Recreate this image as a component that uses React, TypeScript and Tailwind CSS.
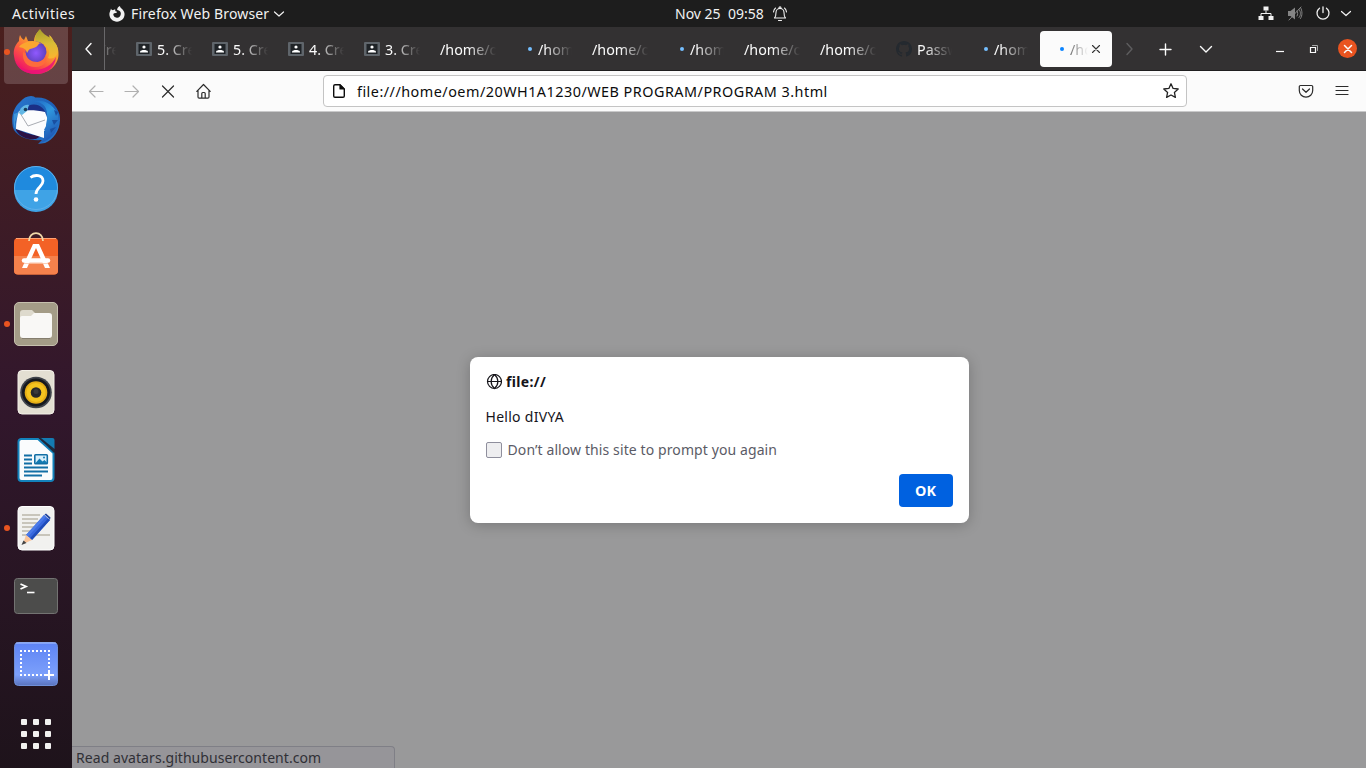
import React from 'react';

type Kids = { children?: React.ReactNode };

function Icon({ children, className = '' }: Kids & { className?: string }) {
  return (
    <svg viewBox="0 0 16 16" width="16" height="16" fill="none" stroke="currentColor" strokeWidth="1.2" strokeLinecap="round" strokeLinejoin="round" className={'block shrink-0 ' + className}>
      {children}
    </svg>
  );
}

function AppIcon({ children }: Kids) {
  return (
    <svg viewBox="0 0 48 48" width="48" height="48" className="block shrink-0">
      {children}
    </svg>
  );
}

function FirefoxIcon() {
  return (
    <AppIcon>
      <defs>
        <linearGradient id="ff-body" x1="0.85" y1="0.1" x2="0.25" y2="0.95">
          <stop offset="0" stopColor="#e8c73a" />
          <stop offset="0.35" stopColor="#f9a02c" />
          <stop offset="0.65" stopColor="#fd5a40" />
          <stop offset="1" stopColor="#ee1268" />
        </linearGradient>
        <linearGradient id="ff-flame" x1="0.5" y1="0" x2="0.6" y2="1">
          <stop offset="0" stopColor="#a9a02c" />
          <stop offset="0.5" stopColor="#d9bb36" />
          <stop offset="1" stopColor="#f9b52f" />
        </linearGradient>
        <radialGradient id="ff-globe" cx="0.5" cy="0.55" r="0.55">
          <stop offset="0" stopColor="#9059ff" />
          <stop offset="1" stopColor="#5a3fb8" />
        </radialGradient>
      </defs>
      <path d="M8 7c-1 3-1 4-1 6-4 4-6 9-5 15 1 11 10 18 22 18s22-8 22.500-19c.3-6-1.500-10-4.500-13-1-3-3-6-5-7 1 3 1 5 0 7C34 9 28 9 28 2c-5 4-6 8-6 12l-6-1-2-5-2 4c-2-1-3-3-4-5z" fill="url(#ff-body)" />
      <path d="M3 33c4 8 11 10 20 9 9 0 17-5 21-13-1 11-10 17-20 17-11 0-18-5-21-13z" fill="#e8107a" opacity=".85" />
      <path d="M28 1c-4 4-6 9-4 13 10 0 16 8 12 16 5 2 10-2 10-8-1-7-4-8-7-12-5-2-9-5-11-9z" fill="url(#ff-flame)" />
      <circle cx="24" cy="24" r="10.500" fill="url(#ff-globe)" />
      <path d="M15 14c5-2 11-1 15 2-3-1-3 0-4 1-2 3-5 3-8 4-2 1-2 3-3 4-1-4-3-5-8-6 2-3 5-4 8-5z" fill="#fba62f" />
      <path d="M13.500 25c1 6 6 9 12 9 5-1 8-4 8-8 3 6-1 13-10 13S10 33 11 24z" fill="#fd6c3c" />
    </AppIcon>
  );
}

function ThunderbirdIcon() {
  return (
    <AppIcon>
      <defs>
        <linearGradient id="tb-blue" x1="0" y1="0" x2="1" y2="1">
          <stop offset="0" stopColor="#2a79cf" />
          <stop offset="0.55" stopColor="#1d5fb6" />
          <stop offset="1" stopColor="#2b7fd0" />
        </linearGradient>
        <linearGradient id="tb-wing" x1="0" y1="0" x2="0.5" y2="1">
          <stop offset="0" stopColor="#1f67c4" />
          <stop offset="0.45" stopColor="#2f97de" />
          <stop offset="1" stopColor="#2058b4" />
        </linearGradient>
      </defs>
      <path d="M19 0c2 0 4 1 4 1.500 13-1 22 7 24.500 17C50 31 43 43 33 47l-7 1 4-4C16 45 3 40 .800 31-1 21 1 12 8 6c3-4 7-6 11-6z" fill="url(#tb-blue)" />
      <path d="M3 32c7 4 15 7 26 8l-5 3C14 44 6 40 3 32z" fill="#2b1245" />
      <path d="M2 18c-1 8 0 13 2 17l-1-9 4-10z" fill="#3c94d8" />
      <path d="M16 10c8-4 17 1 18 9-5-3-11-4-19-2z" fill="#1b2f86" />
      <path d="M7 15c8-1 18-1 26 1l3 8-2 6 1 3-3 2v7L4 33c0-7 1-12 3-18z" fill="#fcfcfd" />
      <path d="M8 17l8 13 17-6" fill="none" stroke="#a9acb3" strokeWidth="1" />
      <path d="M20 6c9-1 15 4 15 12 1 4-1 8-1 12l-2 4 2 1-2 7-4 5c12-3 20-13 18-27C43 9 31 2 20 6z" fill="url(#tb-wing)" />
      <path d="M42 14l2 6 2-4zM40 24l2 5 4-5zM38 33l1 4 5-6z" fill="#1a4fa0" />
      <path d="M7 17c1-5 5-9 10-8l-2 6-5 4z" fill="#62b7e5" />
      <circle cx="13.500" cy="13.500" r="1.800" fill="#183d5b" />
    </AppIcon>
  );
}

function HelpIcon() {
  return (
    <AppIcon>
      <circle cx="24" cy="24" r="22" fill="#1f8ade" />
      <path d="M2 26h44a22 22 0 0 1-44 0z" fill="#3fa3e6" />
      <circle cx="24" cy="24" r="21.500" fill="none" stroke="#5fb0ea" strokeWidth="1" />
      <path d="M18.500 13.500c4-3 12.500-3 12.500 3.500 0 6-7 6-7 13" fill="none" stroke="#fff" strokeWidth="2.800" />
      <circle cx="24" cy="35.500" r="2.300" fill="#fff" />
    </AppIcon>
  );
}

function SoftwareIcon() {
  return (
    <AppIcon>
      <rect x="2" y="6" width="44" height="36.500" rx="4" fill="#f36226" />
      <path d="M2 24h44v14.500a4 4 0 0 1-4 4H6a4 4 0 0 1-4-4z" fill="#f5814c" />
      <path d="M4 6.500h40" stroke="#ffa273" strokeWidth="1" />
      <path d="M17 9c0-10.500 14-10.500 14 0" fill="none" stroke="#f0d9a9" strokeWidth="1.800" />
      <path d="M21 12h6l11 24h-5L24 16 15 36h-5z" fill="#fff" />
      <path d="M12 28.500h24" stroke="#fff" strokeWidth="4.500" strokeLinecap="round" />
      <path d="M12 31.500h24" stroke="#fbc5a8" strokeWidth=".8" />
    </AppIcon>
  );
}

function FilesIcon() {
  return (
    <AppIcon>
      <rect x="2.500" y="2.500" width="43" height="43" rx="4.500" fill="#a49c87" stroke="#c6c0ae" />
      <path d="M8 13a3 3 0 0 1 3-3h9l3 3v5H8z" fill="#dedacd" />
      <path d="M8 18a2 2 0 0 1 2-2h9l3-3h15a3 3 0 0 1 3 3v19a3 3 0 0 1-3 3H11a3 3 0 0 1-3-3z" fill="#f9f8f6" />
      <path d="M10 38.500h28" stroke="#857e6e" strokeWidth="1" />
    </AppIcon>
  );
}

function RhythmboxIcon() {
  return (
    <AppIcon>
      <rect x="6" y="2.500" width="36" height="43.500" rx="4" fill="#e3dfd2" stroke="#f3f0e8" />
      <circle cx="24" cy="24.500" r="15.800" fill="#40444b" />
      <circle cx="24" cy="24.500" r="14" fill="#16191e" />
      <circle cx="24" cy="24.500" r="11.300" fill="#e5ae17" />
      <circle cx="24" cy="24.500" r="9.500" fill="#f4c41f" />
      <circle cx="24" cy="24.500" r="5.300" fill="#27282a" />
      <circle cx="24" cy="23.500" r="2.500" fill="#3b3b3b" />
    </AppIcon>
  );
}

function WriterIcon() {
  return (
    <AppIcon>
      <path d="M9 3h17l15.500 14v25a3 3 0 0 1-3 3H9.500a3 3 0 0 1-3-3V6A3 3 0 0 1 9 3z" fill="#fafcfd" stroke="#1382bb" strokeWidth="2" />
      <path d="M27 1.500h3l12.500 12v4z" fill="#1d2b3d" />
      <path d="M29 2h11.500a2 2 0 0 1 2 2v9z" fill="#147bb2" />
      <path d="M12 19.500h8M12 23.500h8M12 27.500h8M12 31.500h24M12 35.500h24M12 39.500h18" stroke="#126fa5" strokeWidth="2" />
      <rect x="22.800" y="18.800" width="12.500" height="9" rx=".8" fill="#d7effb" stroke="#126fa5" strokeWidth="1.600" />
      <path d="M23.500 27l4-4.500 3 3 2-1.500 3 3z" fill="#147bb2" />
      <circle cx="32" cy="21.500" r="1" fill="#147bb2" />
    </AppIcon>
  );
}

function EditorIcon() {
  return (
    <AppIcon>
      <rect x="6" y="2.500" width="36" height="43.500" rx="4" fill="#f1f1ef" stroke="#fff" />
      <path d="M10 11h18M10 15h16M10 19h18M10 23h14M10 27h9M10 31h28" stroke="#c8c5bb" strokeWidth="1.800" />
      <path d="M32 11l6 5-18 20-6-5z" fill="#3767dd" />
      <path d="M32 11l2 1.700-18 20-2-1.700z" fill="#4a7ae8" />
      <path d="M36 14.500l2 1.500-18 20-2-1.700z" fill="#1f4cb9" />
      <path d="M14 31l6 5-9 4z" fill="#f9c49a" />
      <path d="M11.500 36.500l3 2.500-5 2z" fill="#444" />
      <path d="M32.500 10.500l1.500-1 4.500 4-.5 2z" fill="#23459d" />
    </AppIcon>
  );
}

function TerminalIcon() {
  return (
    <AppIcon>
      <rect x="2.500" y="6.500" width="43" height="35" rx="3" fill="#4c4c4b" stroke="#737372" />
      <path d="M8.500 12l5.500 2.500-5.500 2.500" fill="none" stroke="#fff" strokeWidth="1.800" />
      <path d="M15 20.500h7.500" stroke="#fff" strokeWidth="1.600" />
    </AppIcon>
  );
}

function ScreenshotIcon() {
  return (
    <AppIcon>
      <defs>
        <linearGradient id="shot" x1="0" y1="0" x2="0" y2="1">
          <stop offset="0" stopColor="#5d83f4" />
          <stop offset="0.75" stopColor="#7ca0fb" />
          <stop offset="1" stopColor="#5a73bd" />
        </linearGradient>
      </defs>
      <rect x="2.500" y="2.500" width="43" height="43" rx="4" fill="url(#shot)" stroke="#6f8fd8" />
      <path d="M4 3h40" stroke="#a9c1ff" />
      <path d="M8 11h31M8 35h24" stroke="#fff" strokeWidth="2" strokeDasharray="2 2" />
      <path d="M9 14v20M37 14v16" stroke="#fff" strokeWidth="2" strokeDasharray="2 2" />
      <path d="M32 35h10M37 30v10" stroke="#fff" strokeWidth="2" />
    </AppIcon>
  );
}

function DockItem({ children, running, active }: Kids & { running?: boolean; active?: boolean }) {
  return (
    <div className="flex h-16 w-full shrink-0 items-center">
      <div className="z-10 flex w-1 shrink-0">
        {running && <span className="ml-[4px] size-1.5 shrink-0 rounded-full bg-[#e95420]" />}
      </div>
      <div className={active ? 'flex size-16 items-center justify-center rounded bg-[#ffffff2b]' : 'flex size-16 items-center justify-center'}>
        {children}
      </div>
    </div>
  );
}

function Dock() {
  return (
    <nav className="flex w-[72px] shrink-0 flex-col overflow-hidden bg-linear-to-b from-[#4a1f1d] via-[#32172c] to-[#1e131b]">
      <div className="-mt-[7px] flex flex-col gap-1">
        <DockItem running active><FirefoxIcon /></DockItem>
        <DockItem><ThunderbirdIcon /></DockItem>
        <DockItem><HelpIcon /></DockItem>
        <DockItem><SoftwareIcon /></DockItem>
        <DockItem running><FilesIcon /></DockItem>
        <DockItem><RhythmboxIcon /></DockItem>
        <DockItem><WriterIcon /></DockItem>
        <DockItem running><EditorIcon /></DockItem>
        <DockItem><TerminalIcon /></DockItem>
        <DockItem><ScreenshotIcon /></DockItem>
      </div>
      <div className="mt-[23px] ml-[21px] grid w-[30px] grid-cols-3 gap-1.5">
        {Array.from({ length: 9 }, (_, i) => (
          <span key={i} className="size-1.5 rounded-[1px] bg-[#f2f1f0]" />
        ))}
      </div>
    </nav>
  );
}

function TopBar() {
  return (
    <header className="grid h-[27px] shrink-0 grid-cols-[675px_1fr_108px] items-center bg-[#1d1d1d] text-[14px] leading-[26px] text-[#f2f2f2]">
      <div className="flex items-center pl-3">
        <span className="w-[97px] tracking-[0.48px]">Activities</span>
        <svg viewBox="0 0 16 16" width="16" height="16" className="block shrink-0">
          <path d="M2 2.500C1.800 4 1 5 .5 7-.3 12 3.500 15.700 8 15.700S16 12 15.500 7.500C15.200 5 13.500 3.500 12.500 2.500 11.500 1.800 11 .8 11 0 8.500 1 8 3 8.200 4c3 .5 4 2.500 3.500 4.500A3.800 3.800 0 0 1 4.300 9c0-.8.2-1.500.7-1.800.8.4 2-.3 2.800-.7.6-.4.2-1-.5-1C6.500 5.500 6 5 6.300 3.500 5 3.500 4.500 4 4 4.200 3 4 2.200 3.500 2 2.500z" fill="#f2f2f2" />
        </svg>
        <span className="ml-1.5 w-[140px] tracking-[0.15px]">Firefox Web Browser</span>
        <Icon className="size-4"><path d="M3.500 6l4.500 4 4.500-4" /></Icon>
      </div>
      <div className="flex items-center">
        <span className="w-[97px] whitespace-pre">Nov 25  09:58</span>
        <Icon>
          <path d="M2.500 12h11c-1.500-1.500-1.500-2.500-1.500-5.500a4 4 0 0 0-8 0c0 3 0 4-1.500 5.500zM6.500 14.500h3M7 2c0-1.500 2-1.500 2 0M3.500 2Q1.800 3.500 1.500 6M12.500 2Q14.200 3.500 14.500 6" strokeWidth="1.100" />
        </Icon>
      </div>
      <div className="flex items-center">
        <svg viewBox="0 0 16 16" width="16" height="16" className="block">
          <path d="M5.500 .5h5v4h-5zM.5 10h5v4h-5zM10.500 10h5v4h-5z" fill="#f2f2f2" />
          <path d="M8 4.500v3M3 10V7.500h10V10" fill="none" stroke="#f2f2f2" />
        </svg>
        <Icon className="ml-[13px] text-[#858585]">
          <path d="M1 5h2.500L8 1.500v12L3.500 10H1z" fill="currentColor" stroke="none" />
          <path d="M10 5c1 1.500 1 3.500 0 5M12 3.500c2 2 2 6 0 8M13.500 1.500c2 3.500 2 8 0 11M2 14L14 1" strokeWidth="1" />
        </Icon>
        <Icon className="ml-[12px]"><path d="M4.500 2.200a6 6 0 1 0 7 0M8 .8v5.700" strokeWidth="1.300" /></Icon>
        <Icon className="ml-[7px]"><path d="M3.500 5.500l4.500 4 4.500-4" /></Icon>
      </div>
    </header>
  );
}

type TabData = { title: string; kind: 'class' | 'none' | 'load' | 'github'; active?: boolean };

const tabs: TabData[] = [
  { title: '5. Cre', kind: 'class' },
  { title: '5. Cre', kind: 'class' },
  { title: '5. Cre', kind: 'class' },
  { title: '4. Cre', kind: 'class' },
  { title: '3. Cre', kind: 'class' },
  { title: '/home/oem', kind: 'none' },
  { title: '/home', kind: 'load' },
  { title: '/home/oem', kind: 'none' },
  { title: '/home', kind: 'load' },
  { title: '/home/oem', kind: 'none' },
  { title: '/home/oem', kind: 'none' },
  { title: 'Passw', kind: 'github' },
  { title: '/home', kind: 'load' },
  { title: '/home', kind: 'load', active: true },
];

function Tab({ title, kind, active }: TabData) {
  return (
    <div className={active ? 'flex h-9 w-[72px] shrink-0 items-center rounded bg-[#fbfbfb] px-2 text-[#222]' : 'flex h-9 w-[72px] shrink-0 items-center px-2 text-[#fbfbfb]'}>
      {kind === 'class' && (
        <svg viewBox="0 0 16 16" width="16" height="16" className="mr-[5px] block shrink-0">
          <rect x="0" y="1" width="16" height="14" rx="1" fill="#5f656b" />
          <rect x="2.500" y="3" width="11" height="10" fill="#1f2327" />
          <circle cx="8" cy="6" r="1.600" fill="#fff" />
          <path d="M4 11.500V10.500c1-2 7-2 8 0v1z" fill="#fff" />
        </svg>
      )}
      {kind === 'load' && (
        <span className="mr-1.5 flex w-4 shrink-0 justify-end">
          <span className={active ? 'size-1 rounded-full bg-[#0a84ff]' : 'size-1 rounded-full bg-[#75bfff]'} />
        </span>
      )}
      {kind === 'github' && (
        <svg viewBox="0 0 16 16" width="16" height="16" className="mr-[5px] block shrink-0" fill="#24292f">
          <path d="M8 0C3.580 0 0 3.580 0 8c0 3.540 2.290 6.530 5.470 7.590.4.070.55-.17.55-.38v-1.490c-2.010.37-2.530-.49-2.690-.94-.09-.23-.48-.94-.82-1.130-.28-.15-.68-.52-.01-.53.63-.01 1.080.58 1.230.82.72 1.210 1.870.87 2.330.66.07-.52.28-.87.51-1.070-1.780-.2-3.640-.89-3.640-3.950 0-.87.31-1.590.82-2.150-.08-.2-.36-1.020.08-2.120 0 0 .67-.21 2.200.82a7.400 7.400 0 0 1 4 0c1.530-1.040 2.200-.82 2.200-.82.44 1.100.16 1.920.08 2.120.51.56.82 1.270.82 2.150 0 3.070-1.870 3.750-3.650 3.950.29.25.54.73.54 1.480v2.200c0 .21.15.46.55.38A8 8 0 0 0 16 8c0-4.420-3.580-8-8-8z" />
        </svg>
      )}
      <span className="mt-0.5 min-w-0 flex-1 overflow-hidden whitespace-nowrap mask-[linear-gradient(to_left,transparent,black_28px)]">{title}</span>
      {active && (
        <Icon className="text-[#333]"><path d="M4.500 4.500l7 7M11.500 4.500l-7 7" strokeWidth="1.100" /></Icon>
      )}
    </div>
  );
}

function TabStrip() {
  return (
    <div className="flex h-11 shrink-0 items-center border-b border-[#1f1e1f] bg-[#333132] text-[14.3px] text-[#fbfbfb]">
      <div className="flex h-full w-[33px] shrink-0 items-center justify-center border-r border-[#69686a]">
        <Icon><path d="M11 2.500L6 8l5 5.500" strokeWidth="1.400" /></Icon>
      </div>
      <div className="flex w-[1007px] shrink-0 justify-end gap-1 overflow-hidden">
        {tabs.map((t, i) => <Tab key={i} {...t} />)}
      </div>
      <Icon className="ml-[9px] text-[#5e5d5f]"><path d="M6 2.500L11 8l-5 5.500" strokeWidth="1.400" /></Icon>
      <Icon className="ml-5"><path d="M8.500 3v11M3 8.500h11" strokeWidth="1.400" /></Icon>
      <Icon className="ml-[25px]"><path d="M2.500 5.500L8 11l5.500-5.500" strokeWidth="1.400" /></Icon>
      <Icon className="ml-[58px]"><path d="M4 10.500h8" strokeLinecap="butt" /></Icon>
      <Icon className="ml-[18px]">
        <path d="M4.500 6.500h5v5h-5z" strokeLinejoin="miter" />
        <path d="M6.500 4.500h5v5" stroke="#aaa" strokeWidth="1" />
      </Icon>
      <div className="ml-4 flex size-[19px] items-center justify-center rounded-full bg-[#e95420]">
        <Icon><path d="M4.500 4.500l7 7M11.500 4.500l-7 7" strokeWidth="1.500" /></Icon>
      </div>
    </div>
  );
}

function Toolbar() {
  return (
    <div className="flex h-[41px] shrink-0 items-center border-b border-[#c9c9ca] bg-[#fbfbfb] text-[#2b2b2b]">
      <Icon className="ml-4 text-[#b0b0b0]"><path d="M15 8.500H1.500M7 3L1.500 8.500 7 14" /></Icon>
      <Icon className="ml-5 text-[#b0b0b0]"><path d="M1 8.500h13.500M9 3l5.500 5.500L9 14" /></Icon>
      <Icon className="ml-5"><path d="M2.500 3l11 11M13.500 3l-11 11" /></Icon>
      <Icon className="ml-5">
        <path d="M.8 8.300L7.500 1.500l6.700 6.800M2 7.500V14a1.200 1.200 0 0 0 1.200 1.200h8.600A1.200 1.200 0 0 0 13 14V7.500M5.800 15v-4.500a1 1 0 0 1 1-1h1.400a1 1 0 0 1 1 1V15" />
      </Icon>
      <div className="ml-[111px] flex h-8 w-[864px] items-center rounded border border-[#c4c4c4] bg-white px-[7px] text-[14.4px] text-[#0c0c0c]">
        <Icon><path d="M4 1.800h5L13.300 6v7a1.300 1.300 0 0 1-1.300 1.300H4A1.300 1.300 0 0 1 2.700 13V3A1.300 1.300 0 0 1 4 1.800z" strokeWidth="1.400" /><path d="M9 2v4h4z" fill="currentColor" /></Icon>
        <span className="ml-[10px] flex-1 pt-0.5 tracking-[0.48px]">file:///home/oem/20WH1A1230/WEB PROGRAM/PROGRAM 3.html</span>
        <Icon className="text-[#222]"><path d="M8 .8l2.100 4.600 5.100.6-3.800 3.400 1 5L8 12l-4.400 2.400 1-5L.8 6l5.100-.6z" strokeWidth="1.300" /></Icon>
      </div>
      <Icon className="ml-[111px]"><path d="M2.500 2.500h11a1.200 1.200 0 0 1 1.200 1.200v3.800a6.700 6.700 0 0 1-13.400 0V3.700a1.200 1.200 0 0 1 1.200-1.200zM4.500 6L8 9.300 11.500 6" /></Icon>
      <Icon className="ml-5"><path d="M2 3.500h12M2 7.500h12M2 11.500h12" /></Icon>
    </div>
  );
}

function Dialog() {
  return (
    <section className="mt-[245px] ml-[398px] flex h-[166px] w-[499px] flex-col rounded-lg bg-white px-4 pt-4 pb-4 text-[14px] leading-[18px] text-[#15141a] shadow-[0_2px_14px_rgba(0,0,0,0.22)]">
      <div className="flex items-center">
        <Icon><circle cx="8.500" cy="7.500" r="7" /><path d="M1.500 7.500h14M8.500 .5c-4.500 4-4.500 10 0 14 4.500-4 4.500-10 0-14z" /></Icon>
        <b className="ml-1 tracking-[0.35px]">file://</b>
      </div>
      <p className="mt-[17px] -ml-[0.5px] tracking-[0.28px]">Hello dIVYA</p>
      <label className="mt-[15px] flex items-center text-[#5b5b66]">
        <span className="mr-[5.5px] size-4 rounded-[2px] border border-[#8f8f9d] bg-[#eeeef0]" />
        <span className="tracking-[0.1px]">Don’t allow this site to prompt you again</span>
      </label>
      <button className="mt-auto h-[33px] w-[54px] self-end rounded bg-[#0061e0] pr-px font-['Open_Sans',sans-serif] text-[14.3px] font-bold text-white">OK</button>
    </section>
  );
}

export default function App() {
  return (
    <div className="flex h-[768px] w-[1366px] flex-col overflow-hidden font-['Noto_Sans',sans-serif]">
      <TopBar />
      <div className="flex min-h-0 flex-1">
        <Dock />
        <div className="flex w-[1294px] flex-col">
          <TabStrip />
          <Toolbar />
          <main className="flex flex-1 flex-col justify-between bg-[#99999a]">
            <Dialog />
            <div className="h-[22px] w-[323px] rounded-tr border-t border-r border-[#7f7f86] bg-[#969599] pl-1 text-[14px] leading-[22px] tracking-[0.06px] text-[#303036]">
              Read avatars.githubusercontent.com
            </div>
          </main>
        </div>
      </div>
    </div>
  );
}
